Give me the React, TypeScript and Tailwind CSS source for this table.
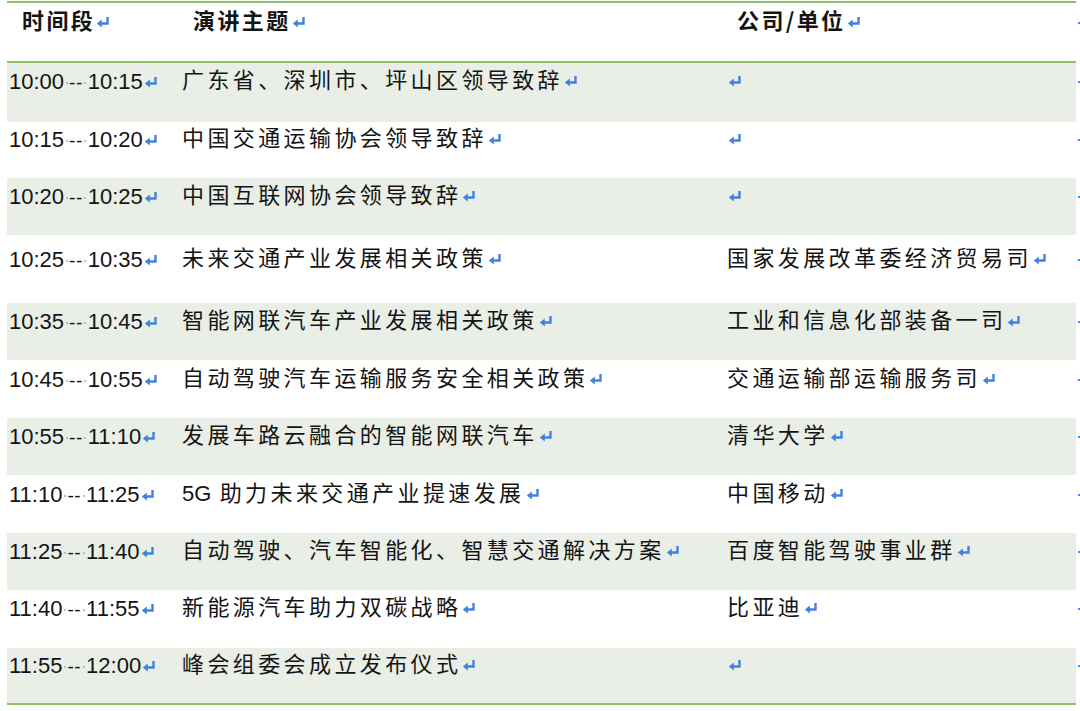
import React from 'react';

interface Row {
  from: string;
  to: string;
  topic: React.ReactNode;
  company: string;
  h: string;
  pt: string;
}

const cjk = '"Noto Sans CJK SC", "Noto Sans", sans-serif';
const num = '"Liberation Sans", "Noto Sans CJK SC", sans-serif';

const ReturnMark = () => (
  <svg width="14" height="12" viewBox="0 0 14 12" className="inline-block ml-[1px] align-middle -mt-[2px]">
    <path d="M11.5 1 V7.5 H5" fill="none" stroke="#3f82e0" strokeWidth="2.4" />
    <path d="M0.8 7.5 L5.8 3.4 V11.6 Z" fill="#3f82e0" />
  </svg>
);

const SpaceDot = () => (
  <span className="inline-flex w-[5px] justify-center items-center align-middle">
    <span className="w-[2px] h-[2px] rounded-full bg-[#7db4f2]" />
  </span>
);

const rows: Row[] = [
  { from: '10:00', to: '10:15', topic: '广东省、深圳市、坪山区领导致辞', company: '', h: 'h-[59px]', pt: 'pt-[2px]' },
  { from: '10:15', to: '10:20', topic: '中国交通运输协会领导致辞', company: '', h: 'h-[56px]', pt: 'pt-[1px]' },
  { from: '10:20', to: '10:25', topic: '中国互联网协会领导致辞', company: '', h: 'h-[57px]', pt: 'pt-[2px]' },
  { from: '10:25', to: '10:35', topic: '未来交通产业发展相关政策', company: '国家发展改革委经济贸易司', h: 'h-[68px]', pt: 'pt-[8px]' },
  { from: '10:35', to: '10:45', topic: '智能网联汽车产业发展相关政策', company: '工业和信息化部装备一司', h: 'h-[57px]', pt: 'pt-[2px]' },
  { from: '10:45', to: '10:55', topic: '自动驾驶汽车运输服务安全相关政策', company: '交通运输部运输服务司', h: 'h-[58px]', pt: 'pt-[3px]' },
  { from: '10:55', to: '11:10', topic: '发展车路云融合的智能网联汽车', company: '清华大学', h: 'h-[57px]', pt: 'pt-[2px]' },
  {
    from: '11:10',
    to: '11:25',
    topic: (
      <>
        <span style={{ fontFamily: num }} className="tracking-normal">5G</span> 助力未来交通产业提速发展
      </>
    ),
    company: '中国移动',
    h: 'h-[58px]',
    pt: 'pt-[3px]',
  },
  { from: '11:25', to: '11:40', topic: '自动驾驶、汽车智能化、智慧交通解决方案', company: '百度智能驾驶事业群', h: 'h-[57px]', pt: 'pt-[2px]' },
  { from: '11:40', to: '11:55', topic: '新能源汽车助力双碳战略', company: '比亚迪', h: 'h-[58px]', pt: 'pt-[2px]' },
  { from: '11:55', to: '12:00', topic: '峰会组委会成立发布仪式', company: '', h: 'h-[57px]', pt: 'pt-[1px]' },
];

export default function App() {
  return (
    <div className="w-[1080px] h-[711px] bg-white overflow-hidden pt-[1px] text-[#141414]" style={{ fontFamily: cjk }}>
      {/* header */}
      <div className="flex">
        <div className="w-[1069px] ml-[7px] border-t-2 border-b-2 border-[#8cc269] h-[62px] flex pt-[1px] text-[22px] leading-[30px] font-bold tracking-[2.4px]">
          <div className="w-[175px] pl-[15px]">时间段<ReturnMark /></div>
          <div className="w-[545px] pl-[11px]">演讲主题<ReturnMark /></div>
          <div className="flex-1 pl-[10px]">公司/单位<ReturnMark /></div>
        </div>
        <div className="w-[4px] flex justify-end pt-[21px]">
          <span className="w-[2px] h-[2px] bg-[#4a8ae6]" />
        </div>
      </div>

      {rows.map((r, i) => (
        <div key={r.from} className="flex">
          <div
            className={`w-[1069px] ml-[7px] flex ${r.h} ${r.pt} text-[22px] leading-[26px] tracking-[3.4px] ${
              i % 2 === 0 ? 'bg-[#e9eee6]' : 'bg-white'
            } ${i === rows.length - 1 ? 'border-b-2 border-[#8cc269]' : ''}`}
          >
            <div className="w-[175px] pl-[2px] pt-[4px] whitespace-nowrap tracking-normal" style={{ fontFamily: num }}>
              {r.from}
              <SpaceDot />
              <span className="tracking-[0.5px] text-[19px]">--</span>
              <SpaceDot />
              {r.to}
              <ReturnMark />
            </div>
            <div className="w-[545px] whitespace-nowrap">
              {r.topic}
              <ReturnMark />
            </div>
            <div className="flex-1 whitespace-nowrap">
              {r.company}
              <ReturnMark />
            </div>
          </div>
          <div className={`w-[4px] flex justify-end ${r.pt}`}>
            <span className="w-[2px] h-[2px] bg-[#4a8ae6] mt-[16px]" />
          </div>
        </div>
      ))}
    </div>
  );
}
